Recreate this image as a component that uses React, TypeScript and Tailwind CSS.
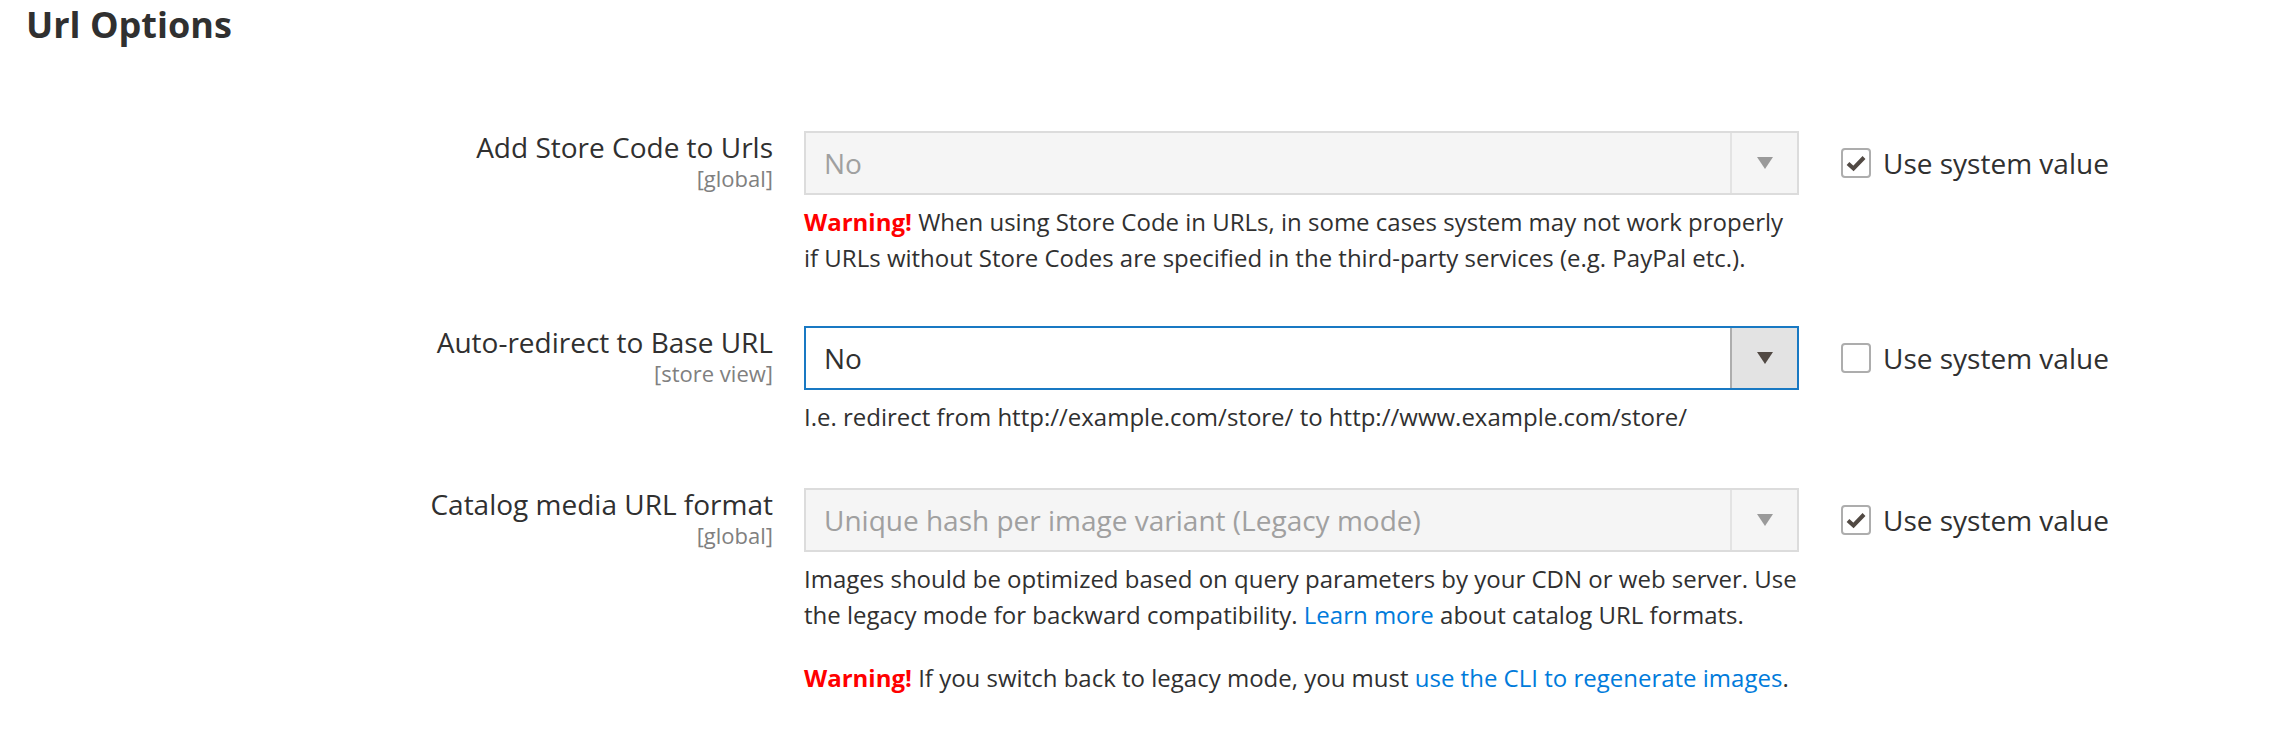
import * as React from "react";

type FieldProps = {
  label: string;
  scope: string;
  value: string;
  disabled?: boolean;
  useSystem: boolean;
  className?: string;
  children: React.ReactNode;
};

const Arrow = ({ disabled }: { disabled?: boolean }) => (
  <svg width="16" height="12" viewBox="0 0 16 12">
    <path d="M0 0 L16 0 L8 12 Z" fill={disabled ? "#9a9a9a" : "#514943"} />
  </svg>
);

const Checkbox = ({ checked }: { checked: boolean }) => (
  <span className="flex h-[30px] w-[30px] items-center justify-center rounded-[4px] border-2 border-[#adadad] bg-white">
    {checked && (
      <svg width="22" height="22" viewBox="0 0 22 22">
        <path
          d="M3 11.5 L8.5 16.5 L19 5.5"
          fill="none"
          stroke="#514943"
          strokeWidth="4"
        />
      </svg>
    )}
  </span>
);

const Field = ({ label, scope, value, disabled, useSystem, className, children }: FieldProps) => (
  <div className={"flex items-start " + (className ?? "")}>
    <div className="w-[773px] text-right">
      <div className="text-[28px] leading-[1.2] text-[#303030]">{label}</div>
      <div className="text-[22px] leading-[1.2] text-[#808080]">{scope}</div>
    </div>
    <div className="ml-[31px] w-[995px]">
      <div
        className={
          disabled
            ? "flex h-[64px] items-stretch border-2 border-[#dcdcdc] bg-[#f5f5f5]"
            : "flex h-[64px] items-stretch border-2 border-[#1979c3] bg-white"
        }
      >
        <div
          className={
            disabled
              ? "flex flex-1 items-center px-[18px] text-[28px] text-[#a0a0a0]"
              : "flex flex-1 items-center px-[18px] text-[28px] text-[#303030]"
          }
        >
          {value}
        </div>
        <div
          className={
            disabled
              ? "flex w-[67px] items-center justify-center border-l-2 border-[#e3e3e3] bg-[#f5f5f5]"
              : "flex w-[67px] items-center justify-center border-l-2 border-[#adadad] bg-[#e3e3e3]"
          }
        >
          <Arrow disabled={disabled} />
        </div>
      </div>
      <div className="mt-[9px] text-[24px] leading-[36px] text-[#303030]">{children}</div>
    </div>
    <label className="ml-[42px] flex h-[64px] items-center gap-[12px] text-[28px] text-[#303030]">
      <Checkbox checked={useSystem} />
      <span>Use system value</span>
    </label>
  </div>
);

const Warning = () => <strong className="font-bold text-[#ff0000]">Warning!</strong>;

export default function App() {
  return (
    <div
      className="min-h-[746px] w-[2296px] bg-white"
      style={{ fontFamily: '"Open Sans", "Noto Sans", sans-serif' }}
    >
      <h2 className="pl-[26px] pt-[3px] text-[36px] font-bold leading-[1.2] text-[#303030]">
        Url Options
      </h2>
      <div className="mt-[85px] flex flex-col gap-[50px]">
        <Field
          label="Add Store Code to Urls"
          scope="[global]"
          value="No"
          disabled
          useSystem
        >
          <Warning /> When using Store Code in URLs, in some cases system may not work properly
          if URLs without Store Codes are specified in the third-party services (e.g. PayPal etc.).
        </Field>
        <Field
          label="Auto-redirect to Base URL"
          scope="[store view]"
          value="No"
          useSystem={false}
        >
          I.e. redirect from http://example.com/store/ to http://www.example.com/store/
        </Field>
        <Field
          label="Catalog media URL format"
          scope="[global]"
          value="Unique hash per image variant (Legacy mode)"
          disabled
          useSystem
          className="mt-[3px]"
        >
          <p>
            Images should be optimized based on query parameters by your CDN or web server. Use
            the legacy mode for backward compatibility.{" "}
            <a className="text-[#007bdb]" href="#">
              Learn more
            </a>{" "}
            about catalog URL formats.
          </p>
          <p className="mt-[27px]">
            <Warning /> If you switch back to legacy mode, you must{" "}
            <a className="text-[#007bdb]" href="#">
              use the CLI to regenerate images
            </a>
            .
          </p>
        </Field>
      </div>
    </div>
  );
}
